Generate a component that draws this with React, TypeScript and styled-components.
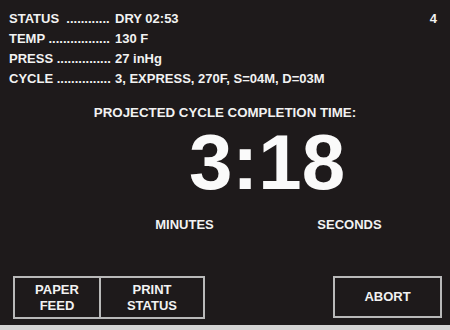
import React from "react"
import styled, { createGlobalStyle } from "styled-components"

const GlobalStyle = createGlobalStyle`
    html, body {
        margin: 0;
        padding: 0;
        background: #1e1a1b;
    }
`

const Screen = styled.div`
    width: 450px;
    height: 330px;
    box-sizing: border-box;
    display: flex;
    flex-direction: column;
    background: #1e1a1b;
    color: #f2f2f2;
    font-family: "Liberation Sans", Arial, sans-serif;
    font-weight: bold;
    font-size: 13px;
    overflow: hidden;
`

const Header = styled.div`
    display: flex;
    justify-content: space-between;
    padding: 9px 13px 0 9px;
`

const StatusList = styled.div`
    display: grid;
    grid-template-columns: 102px auto;
    column-gap: 4px;
    line-height: 20px;
`

const Label = styled.div`
    white-space: pre;
`

const Value = styled.div`
    white-space: nowrap;
`

const PageNumber = styled.div`
    line-height: 20px;
`

const Title = styled.div`
    margin-top: 14px;
    text-align: center;
    line-height: 20px;
    font-size: 13.3px;
`

const TimeBlock = styled.div`
    width: 330px;
    margin-left: 102px;
    display: flex;
    flex-direction: column;
`

const BigTime = styled.div`
    text-align: center;
    font-size: 78px;
    line-height: 78px;
    color: #fafafa;
`

const Units = styled.div`
    display: grid;
    grid-template-columns: 1fr 1fr;
    margin-top: 14px;
    line-height: 20px;
    text-align: center;
`

const Footer = styled.div`
    margin-top: auto;
    display: flex;
    justify-content: space-between;
    align-items: flex-start;
    padding: 0 8px 6px 13px;
`

const ButtonGroup = styled.div`
    display: flex;
`

const Button = styled.button<{ $w: number; $h: number }>`
    width: ${p => p.$w}px;
    height: ${p => p.$h}px;
    box-sizing: border-box;
    border: 2px solid #b9b9b9;
    background: transparent;
    color: #f2f2f2;
    font-family: inherit;
    font-weight: bold;
    font-size: 13px;
    line-height: 16px;
    padding: 0;
    cursor: pointer;
    & + & {
        border-left: none;
    }
`

const BottomStrip = styled.div`
    height: 5px;
    background: #d4d4d4;
`

const rows = [
    { label: "STATUS  ", dots: 12, value: "DRY 02:53" },
    { label: "TEMP ", dots: 17, value: "130 F" },
    { label: "PRESS ", dots: 15, value: "27 inHg" },
    { label: "CYCLE ", dots: 15, value: "3, EXPRESS, 270F, S=04M, D=03M" },
]

const App: React.FC = () =>
{
    return (
        <>
            <GlobalStyle />
            <Screen>
                <Header>
                    <StatusList>
                        {rows.map(r => (
                            <React.Fragment key={r.label}>
                                <Label>{r.label + ".".repeat(r.dots)}</Label>
                                <Value>{r.value}</Value>
                            </React.Fragment>
                        ))}
                    </StatusList>
                    <PageNumber>4</PageNumber>
                </Header>
                <Title>PROJECTED CYCLE COMPLETION TIME:</Title>
                <TimeBlock>
                    <BigTime>3:18</BigTime>
                    <Units>
                        <div>MINUTES</div>
                        <div>SECONDS</div>
                    </Units>
                </TimeBlock>
                <Footer>
                    <ButtonGroup>
                        <Button $w={88} $h={43}>PAPER<br />FEED</Button>
                        <Button $w={104} $h={43}>PRINT<br />STATUS</Button>
                    </ButtonGroup>
                    <Button $w={109} $h={42}>ABORT</Button>
                </Footer>
                <BottomStrip />
            </Screen>
        </>
    )
}

export default App
